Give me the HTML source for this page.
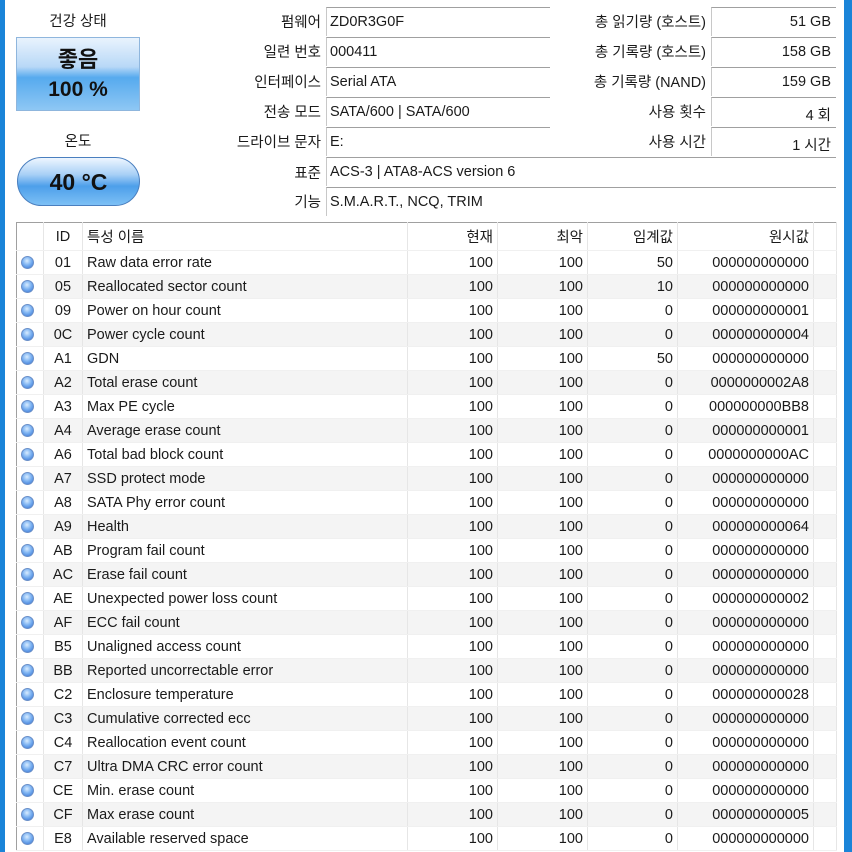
<!DOCTYPE html>
<html><head><meta charset="utf-8"><style>
*{margin:0;padding:0;box-sizing:border-box}
body{width:852px;height:852px;overflow:hidden;background:#fff;position:relative;font-family:"Liberation Sans","Noto Sans CJK KR",sans-serif;font-size:14.5px;color:#1a1a1a}
.a{position:absolute;white-space:nowrap}
.lbl{text-align:right}
.box{position:absolute;border-top:1px solid #a0a0a0;border-left:1px solid #c8c8c8;height:29px;padding:6px 0 0 3px}
.rbox{text-align:right;padding-right:5px}
table{position:absolute;left:16px;top:222px;width:820px;border-collapse:collapse;border:1px solid #a0a0a0;table-layout:fixed}
td{height:24px;padding:0 4px;border-right:1px solid #e6e6e6;border-bottom:1px solid #f0f0f0;white-space:nowrap;overflow:hidden}
tr:first-child td{height:28px}
tr:nth-child(odd) td{background:#f4f4f4}
tr:nth-child(odd) td:first-child,tr:first-child td{background:#fff}
td.r{text-align:right}
td.c{text-align:center}
.dot{display:inline-block;width:13px;height:13px;border-radius:50%;background:radial-gradient(circle at 45% 35%,#d8ecff 0%,#7fb4f2 45%,#2e6fd3 100%);border:1px solid #6a8fc8;vertical-align:middle}
</style></head><body>
<div class="a" style="left:0;top:0;width:5px;height:852px;background:#1a84d8"></div>
<div class="a" style="left:844px;top:0;width:8px;height:852px;background:#1a84d8"></div>

<div class="a" style="left:16px;top:10px;width:124px;text-align:center">건강 상태</div>
<div class="a" style="left:16px;top:37px;width:124px;height:74px;border:1px solid #8fb6dd;background:linear-gradient(#e9f3fd 0%,#b8d8f7 40%,#56aaee 55%,#8ec7f4 100%);text-align:center;font-weight:bold;color:#111">
<div style="font-size:22px;margin-top:8px;line-height:28px">좋음</div>
<div style="font-size:21px;line-height:32px">100 %</div></div>
<div class="a" style="left:16px;top:130px;width:124px;text-align:center">온도</div>
<div class="a" style="left:17px;top:157px;width:123px;height:49px;border-radius:25px;border:1px solid #4a7fbf;background:linear-gradient(#eef6ff 0%,#a9d0f6 35%,#4d9fea 60%,#7dc0f5 100%);text-align:center;font-weight:bold;font-size:23px;line-height:48px;color:#111">40 °C</div>

<div class="a lbl" style="right:531px;top:11px">펌웨어</div>
<div class="a lbl" style="right:531px;top:41px">일련 번호</div>
<div class="a lbl" style="right:531px;top:71px">인터페이스</div>
<div class="a lbl" style="right:531px;top:101px">전송 모드</div>
<div class="a lbl" style="right:531px;top:131px">드라이브 문자</div>
<div class="a lbl" style="right:531px;top:162px">표준</div>
<div class="a lbl" style="right:531px;top:191px">기능</div>
<div class="box" style="left:326px;top:7px;width:224px">ZD0R3G0F</div>
<div class="box" style="left:326px;top:37px;width:224px">000411</div>
<div class="box" style="left:326px;top:67px;width:224px">Serial ATA</div>
<div class="box" style="left:326px;top:97px;width:224px">SATA/600 | SATA/600</div>
<div class="box" style="left:326px;top:127px;width:224px">E:</div>
<div class="box" style="left:326px;top:157px;width:510px">ACS-3 | ATA8-ACS version 6</div>
<div class="box" style="left:326px;top:187px;width:510px">S.M.A.R.T., NCQ, TRIM</div>

<div class="a lbl" style="right:146px;top:11px">총 읽기량 (호스트)</div>
<div class="a lbl" style="right:146px;top:41px">총 기록량 (호스트)</div>
<div class="a lbl" style="right:146px;top:71px">총 기록량 (NAND)</div>
<div class="a lbl" style="right:146px;top:101px">사용 횟수</div>
<div class="a lbl" style="right:146px;top:131px">사용 시간</div>
<div class="box rbox" style="left:711px;top:7px;width:125px">51 GB</div>
<div class="box rbox" style="left:711px;top:37px;width:125px">158 GB</div>
<div class="box rbox" style="left:711px;top:67px;width:125px">159 GB</div>
<div class="box rbox" style="left:711px;top:97px;width:125px">4 회</div>
<div class="box rbox" style="left:711px;top:127px;width:125px">1 시간</div>

<table>
<colgroup><col style="width:27px"><col style="width:39px"><col style="width:325px"><col style="width:90px"><col style="width:90px"><col style="width:90px"><col style="width:136px"><col style="width:23px"></colgroup>
<tr><td></td><td class="c">ID</td><td>특성 이름</td><td class="r">현재</td><td class="r">최악</td><td class="r">임계값</td><td class="r">원시값</td><td></td></tr>
<tr><td><span class="dot"></span></td><td class="c">01</td><td>Raw data error rate</td><td class="r">100</td><td class="r">100</td><td class="r">50</td><td class="r">000000000000</td><td></td></tr>
<tr><td><span class="dot"></span></td><td class="c">05</td><td>Reallocated sector count</td><td class="r">100</td><td class="r">100</td><td class="r">10</td><td class="r">000000000000</td><td></td></tr>
<tr><td><span class="dot"></span></td><td class="c">09</td><td>Power on hour count</td><td class="r">100</td><td class="r">100</td><td class="r">0</td><td class="r">000000000001</td><td></td></tr>
<tr><td><span class="dot"></span></td><td class="c">0C</td><td>Power cycle count</td><td class="r">100</td><td class="r">100</td><td class="r">0</td><td class="r">000000000004</td><td></td></tr>
<tr><td><span class="dot"></span></td><td class="c">A1</td><td>GDN</td><td class="r">100</td><td class="r">100</td><td class="r">50</td><td class="r">000000000000</td><td></td></tr>
<tr><td><span class="dot"></span></td><td class="c">A2</td><td>Total erase count</td><td class="r">100</td><td class="r">100</td><td class="r">0</td><td class="r">0000000002A8</td><td></td></tr>
<tr><td><span class="dot"></span></td><td class="c">A3</td><td>Max PE cycle</td><td class="r">100</td><td class="r">100</td><td class="r">0</td><td class="r">000000000BB8</td><td></td></tr>
<tr><td><span class="dot"></span></td><td class="c">A4</td><td>Average erase count</td><td class="r">100</td><td class="r">100</td><td class="r">0</td><td class="r">000000000001</td><td></td></tr>
<tr><td><span class="dot"></span></td><td class="c">A6</td><td>Total bad block count</td><td class="r">100</td><td class="r">100</td><td class="r">0</td><td class="r">0000000000AC</td><td></td></tr>
<tr><td><span class="dot"></span></td><td class="c">A7</td><td>SSD protect mode</td><td class="r">100</td><td class="r">100</td><td class="r">0</td><td class="r">000000000000</td><td></td></tr>
<tr><td><span class="dot"></span></td><td class="c">A8</td><td>SATA Phy error count</td><td class="r">100</td><td class="r">100</td><td class="r">0</td><td class="r">000000000000</td><td></td></tr>
<tr><td><span class="dot"></span></td><td class="c">A9</td><td>Health</td><td class="r">100</td><td class="r">100</td><td class="r">0</td><td class="r">000000000064</td><td></td></tr>
<tr><td><span class="dot"></span></td><td class="c">AB</td><td>Program fail count</td><td class="r">100</td><td class="r">100</td><td class="r">0</td><td class="r">000000000000</td><td></td></tr>
<tr><td><span class="dot"></span></td><td class="c">AC</td><td>Erase fail count</td><td class="r">100</td><td class="r">100</td><td class="r">0</td><td class="r">000000000000</td><td></td></tr>
<tr><td><span class="dot"></span></td><td class="c">AE</td><td>Unexpected power loss count</td><td class="r">100</td><td class="r">100</td><td class="r">0</td><td class="r">000000000002</td><td></td></tr>
<tr><td><span class="dot"></span></td><td class="c">AF</td><td>ECC fail count</td><td class="r">100</td><td class="r">100</td><td class="r">0</td><td class="r">000000000000</td><td></td></tr>
<tr><td><span class="dot"></span></td><td class="c">B5</td><td>Unaligned access count</td><td class="r">100</td><td class="r">100</td><td class="r">0</td><td class="r">000000000000</td><td></td></tr>
<tr><td><span class="dot"></span></td><td class="c">BB</td><td>Reported uncorrectable error</td><td class="r">100</td><td class="r">100</td><td class="r">0</td><td class="r">000000000000</td><td></td></tr>
<tr><td><span class="dot"></span></td><td class="c">C2</td><td>Enclosure temperature</td><td class="r">100</td><td class="r">100</td><td class="r">0</td><td class="r">000000000028</td><td></td></tr>
<tr><td><span class="dot"></span></td><td class="c">C3</td><td>Cumulative corrected ecc</td><td class="r">100</td><td class="r">100</td><td class="r">0</td><td class="r">000000000000</td><td></td></tr>
<tr><td><span class="dot"></span></td><td class="c">C4</td><td>Reallocation event count</td><td class="r">100</td><td class="r">100</td><td class="r">0</td><td class="r">000000000000</td><td></td></tr>
<tr><td><span class="dot"></span></td><td class="c">C7</td><td>Ultra DMA CRC error count</td><td class="r">100</td><td class="r">100</td><td class="r">0</td><td class="r">000000000000</td><td></td></tr>
<tr><td><span class="dot"></span></td><td class="c">CE</td><td>Min. erase count</td><td class="r">100</td><td class="r">100</td><td class="r">0</td><td class="r">000000000000</td><td></td></tr>
<tr><td><span class="dot"></span></td><td class="c">CF</td><td>Max erase count</td><td class="r">100</td><td class="r">100</td><td class="r">0</td><td class="r">000000000005</td><td></td></tr>
<tr><td><span class="dot"></span></td><td class="c">E8</td><td>Available reserved space</td><td class="r">100</td><td class="r">100</td><td class="r">0</td><td class="r">000000000000</td><td></td></tr>
</table>
</body></html>
